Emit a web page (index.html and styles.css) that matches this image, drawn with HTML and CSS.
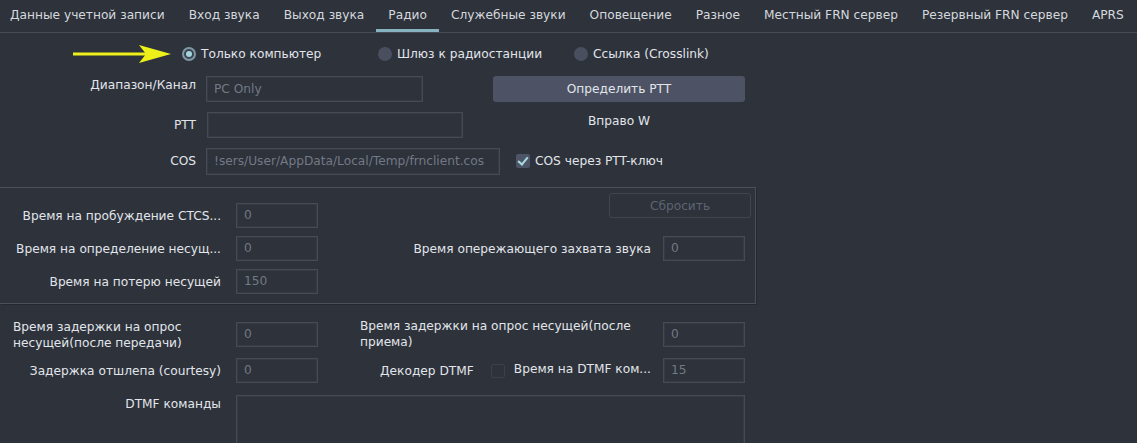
FILE: index.html
```html
<!DOCTYPE html>
<html lang="ru">
<head>
    <meta charset="UTF-8">
    <title>Радио - настройки</title>
    <link rel="stylesheet" href="styles.css">
</head>
<body>
    <nav class="tabs">
        <span class="tab">Данные учетной записи</span>
        <span class="tab">Вход звука</span>
        <span class="tab">Выход звука</span>
        <span class="tab active">Радио</span>
        <span class="tab">Служебные звуки</span>
        <span class="tab">Оповещение</span>
        <span class="tab">Разное</span>
        <span class="tab">Местный FRN сервер</span>
        <span class="tab">Резервный FRN сервер</span>
        <span class="tab">APRS</span>
    </nav>

    <div class="mode-row">
        <svg class="arrow" width="100" height="20" viewBox="0 0 100 20">
            <line x1="0" y1="10" x2="75" y2="10" stroke="#eef01a" stroke-width="3"/>
            <polygon points="66,1 98,10 66,19 73,10" fill="#eef01a"/>
        </svg>
        <label class="radio-item"><span class="radio checked"></span>Только компьютер</label>
        <label class="radio-item"><span class="radio"></span>Шлюз к радиостанции</label>
        <label class="radio-item"><span class="radio"></span>Ссылка (Crosslink)</label>
    </div>

    <div class="top-grid">
        <span class="lbl lbl-high">Диапазон/Канал</span>
        <div class="field w217 muted">PC Only</div>
        <button class="btn">Определить PTT</button>

        <span class="lbl">PTT</span>
        <div class="field w256"></div>
        <span class="side-text">Вправо W</span>

        <span class="lbl">COS</span>
        <div class="field w294 muted">!sers/User/AppData/Local/Temp/frnclient.cos</div>
        <label class="check-item"><span class="check on"></span>COS через PTT-ключ</label>
    </div>

    <section class="group">
        <div class="grid">
            <span class="lbl">Время на пробуждение CTCS...</span>
            <div class="field small muted">0</div>
            <button class="btn btn-off">Сбросить</button>

            <span class="lbl">Время на определение несущ...</span>
            <div class="field small muted">0</div>
            <span class="lbl lbl-r">Время опережающего захвата звука</span>
            <div class="field small muted">0</div>

            <span class="lbl">Время на потерю несущей</span>
            <div class="field small muted">150</div>
        </div>
    </section>

    <section class="bottom">
        <div class="grid grid-bottom">
            <span class="lbl lbl-left">Время задержки на опрос<br>несущей(после передачи)</span>
            <div class="field small muted">0</div>
            <span class="lbl lbl-r lbl-wrap">Время задержки на опрос несущей(после<br>приема)</span>
            <div class="field small muted">0</div>

            <span class="lbl">Задержка отшлепа (courtesy)</span>
            <div class="field small muted">0</div>
            <div class="dtmf-cell">
                <span>Декодер DTMF</span>
                <span class="check"></span>
                <span class="dtmf-time">Время на DTMF ком...</span>
            </div>
            <div class="field small muted">15</div>

            <span class="lbl lbl-top">DTMF команды</span>
            <div class="field area"></div>
        </div>
    </section>
</body>
</html>
```

FILE: styles.css
```css
* {
    margin: 0;
    padding: 0;
    box-sizing: border-box;
}

body {
    background-color: #2d323b;
    color: #e2e5ea;
    font-family: "DejaVu Sans", "Liberation Sans", sans-serif;
    font-size: 12.2px;
    width: 1137px;
    height: 443px;
    overflow: hidden;
}

/* вкладки */
.tabs {
    display: flex;
    height: 33px;
    border-bottom: 1px solid #464c55;
}

.tab {
    padding: 0 12px;
    line-height: 31px;
    color: #d5d8dd;
    white-space: nowrap;
}

.tabs .tab:first-child {
    padding-left: 10px;
}

.tab.active {
    box-shadow: inset 0 -3px 0 #86b3bf;
}

/* режим работы */
.mode-row {
    display: flex;
    align-items: center;
    height: 20px;
    margin-top: 11px;
    padding-left: 73px;
}

.arrow {
    margin-right: 9px;
}

.radio-item {
    display: flex;
    align-items: center;
    gap: 5px;
    width: 196px;
    white-space: nowrap;
}

.radio {
    width: 14px;
    height: 14px;
    border-radius: 50%;
    background-color: #4a4f60;
}

.radio.checked {
    background-color: #3c4452;
    border: 2px solid #7f98a6;
    position: relative;
}

.radio.checked::after {
    content: "";
    position: absolute;
    left: 2px;
    top: 2px;
    width: 6px;
    height: 6px;
    border-radius: 50%;
    background-color: #a4d4dc;
}

/* верхняя часть */
.top-grid {
    display: grid;
    grid-template-columns: 206px 287px 252px;
    grid-auto-rows: 26px;
    row-gap: 10px;
    margin-top: 12px;
    margin-bottom: 13px;
    align-items: center;
}

.lbl {
    text-align: right;
    padding-right: 10px;
    white-space: nowrap;
}

.lbl-high {
    align-self: start;
    padding-top: 2px;
}

.field {
    height: 26px;
    border: 1px solid #454b55;
    box-shadow: inset 0 0 0 1px #353a43;
    padding: 0 7px;
    line-height: 24px;
    white-space: nowrap;
    overflow: hidden;
}

.muted {
    color: #737985;
}

.w217 { width: 217px; }
.w256 { width: 256px; margin-left: 1px; }
.w294 { width: 294px; height: 27px; }

.btn {
    height: 26px;
    border: none;
    border-radius: 3px;
    background-color: #4d5365;
    color: #e2e5ea;
    font-family: inherit;
    font-size: 12.2px;
}

.btn-off {
    background-color: transparent;
    border: 1px solid #40464f;
    color: #5e6470;
}

.side-text {
    text-align: center;
    margin-top: -8px;
}

.check-item {
    display: flex;
    align-items: center;
    gap: 5px;
    padding-left: 23px;
    white-space: nowrap;
}

.check {
    width: 14px;
    height: 14px;
    border-radius: 2px;
    border: 1px solid #3b414b;
    flex-shrink: 0;
}

.check.on {
    border: none;
    background-color: #4c5466;
    position: relative;
}

.check.on::after {
    content: "";
    position: absolute;
    left: 4px;
    top: 1px;
    width: 4px;
    height: 8px;
    border-right: 2px solid #a9dbe3;
    border-bottom: 2px solid #a9dbe3;
    transform: rotate(40deg);
}

/* группы с таймингами */
.grid {
    display: grid;
    grid-template-columns: 236px 82px 345px 82px;
    align-items: center;
}

.grid .lbl {
    padding-right: 15px;
}

.grid .lbl-r {
    padding-right: 12px;
}

.grid .field.small {
    height: 25px;
    line-height: 23px;
}

.group {
    width: 756px;
    border: 1px solid #4a505a;
    border-left: none;
    box-shadow: 1px 1px 0 #24282f;
    padding: 15px 0 9px;
}

.group .grid {
    grid-auto-rows: 25px;
    row-gap: 8px;
}

.group .btn-off {
    grid-column: 3 / 5;
    justify-self: end;
    width: 142px;
    height: 25px;
    align-self: start;
    margin-top: -10px;
    margin-right: -6px;
}

.bottom {
    padding-top: 18px;
}

.grid-bottom {
    grid-template-rows: 25px 25px 50px;
    row-gap: 11px;
}

.lbl-left {
    text-align: left;
    padding-left: 13px;
    line-height: 16px;
}

.lbl-wrap {
    text-align: left;
    padding-left: 42px;
    line-height: 16px;
    margin-top: -2px;
}

.dtmf-cell {
    display: flex;
    align-items: center;
    justify-content: flex-end;
    padding-right: 12px;
}

.dtmf-cell .check {
    margin: 0 9px 0 17px;
}

.dtmf-time {
    margin-top: -3px;
}

.lbl-top {
    align-self: start;
    padding-top: 3px;
}

.field.area {
    grid-column: 2 / 5;
    height: 52px;
    align-self: start;
    margin-top: 1px;
}
```
